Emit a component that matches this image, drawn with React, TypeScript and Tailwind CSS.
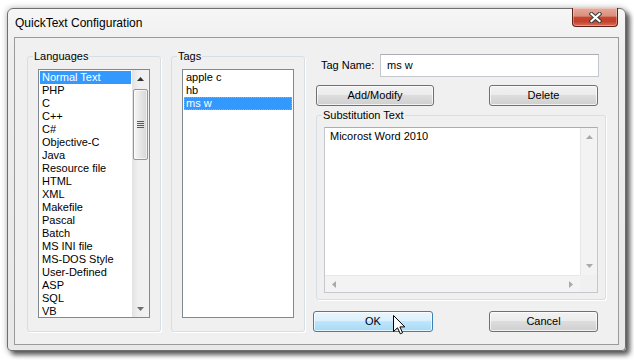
import React from "react";

const languages = [
  "Normal Text", "PHP", "C", "C++", "C#", "Objective-C", "Java", "Resource file", "HTML", "XML",
  "Makefile", "Pascal", "Batch", "MS INI file", "MS-DOS Style", "User-Defined", "ASP", "SQL", "VB",
];
const tags = ["apple c", "hb", "ms w"];

const Tri = ({ dir, color }: { dir: "up" | "down" | "left" | "right"; color: string }) => {
  const d = {
    up: "M0 4 L3.5 0 L7 4 Z",
    down: "M0 0 L7 0 L3.5 4 Z",
    left: "M4 0 L4 7 L0 3.5 Z",
    right: "M0 0 L4 3.5 L0 7 Z",
  }[dir];
  const vertical = dir === "up" || dir === "down";
  return (
    <svg width={vertical ? 7 : 4} height={vertical ? 4 : 7} viewBox={vertical ? "0 0 7 4" : "0 0 4 7"}>
      <path d={d} fill={color} />
    </svg>
  );
};

const GroupBox = ({ label, className, children }: { label: string; className: string; children: React.ReactNode }) => (
  <fieldset className={`border border-[#d5dfe5] rounded-[3px] shadow-[1px_1px_0_#fff] ${className}`}>
    <legend className="ml-[5px] px-[1px] leading-[14px]">{label}</legend>
    {children}
  </fieldset>
);

const Button = ({ label, hot, className }: { label: string; hot?: boolean; className: string }) => (
  <div
    className={`h-[21px] rounded-[3px] border flex items-center justify-center shadow-[inset_0_0_0_1px_rgba(255,255,255,0.7)] ${
      hot
        ? "border-[#3c7fb1] bg-[linear-gradient(to_bottom,#eaf6fd_0%,#d9f0fc_50%,#bee6fd_50%,#a7d9f5_100%)]"
        : "border-[#707070] bg-[linear-gradient(to_bottom,#f2f2f2_0%,#ebebeb_50%,#dddddd_50%,#cfcfcf_100%)]"
    } ${className}`}
  >
    {label}
  </div>
);

export default function App() {
  return (
    <div className="relative w-[634px] h-[360px] overflow-hidden bg-white pt-[8px] pl-[7px] font-['Liberation_Sans',Arial,sans-serif] text-[11px] leading-[13px] text-black">
      {/* window */}
      <div className="w-[619px] h-[343px] flex flex-col border border-[#6e6e6e] rounded-t-[6px] rounded-b-[4px] bg-[linear-gradient(to_bottom,#f6f6f6,#eeeeee_40px,#e8e8e8)] shadow-[0_0_6px_rgba(0,0,0,0.3),4px_4px_5px_rgba(0,0,0,0.6)]">
        {/* title bar */}
        <div className="h-[28px] flex items-start justify-between">
          <div className="pl-[7px] pt-[7px] text-[12px] leading-[15px]">QuickText Configuration</div>
          <div className="mt-[-1px] mr-[7px] w-[46px] h-[19px] rounded-b-[4px] border border-t-0 border-[#5e2219] flex items-center justify-center bg-[linear-gradient(to_bottom,#e8a99b_0%,#d98f7e_45%,#c6462f_52%,#c4412b_75%,#d8705b_100%)] shadow-[inset_0_0_0_1px_rgba(255,255,255,0.3)]">
            <svg width="13" height="11" viewBox="0 0 13 11">
              <path d="M2.5 2 L10.5 9 M10.5 2 L2.5 9" stroke="#3a3a3a" strokeWidth="4.2" strokeLinecap="square" />
              <path d="M2.5 2 L10.5 9 M10.5 2 L2.5 9" stroke="#ffffff" strokeWidth="2.2" strokeLinecap="square" />
            </svg>
          </div>
        </div>

        {/* client area */}
        <div className="mx-[6px] h-[308px] border border-[#9a9a9a] bg-[#f0f0f0] flex items-start pl-[12px] pt-[11px]">
          <GroupBox label="Languages" className="w-[134px] h-[283px]">
            <div className="pl-[10px] pt-[6px]">
              <div className="flex w-[112px] h-[249px] border border-[#828790] bg-white">
                <div className="flex-1 p-[1px] overflow-hidden">
                  {languages.map((l, i) => (
                    <div
                      key={l}
                      className={`h-[13px] pl-[2px] whitespace-nowrap ${i === 0 ? "bg-[#3399ff] text-white" : ""}`}
                    >
                      {l}
                    </div>
                  ))}
                </div>
                <div className="w-[17px] flex flex-col bg-[linear-gradient(to_right,#e2e2e2,#efefef_35%,#f2f2f2)]">
                  <div className="h-[17px] flex items-center justify-center">
                    <Tri dir="up" color="#303030" />
                  </div>
                  <div className="flex-1 pt-[2px]">
                    <div className="mx-[1px] h-[71px] rounded-[2px] border border-[#959595] bg-[linear-gradient(to_right,#f6f6f6,#e6e6e6_50%,#d6d6d6)] flex items-center justify-center shadow-[inset_0_0_0_1px_rgba(255,255,255,0.6)]">
                      <svg width="7" height="7" viewBox="0 0 7 7">
                        <path d="M0 0.5 H7 M0 2.5 H7 M0 4.5 H7 M0 6.5 H7" stroke="#5a5a5a" strokeWidth="1" />
                      </svg>
                    </div>
                  </div>
                  <div className="h-[17px] flex items-center justify-center">
                    <Tri dir="down" color="#6e6e6e" />
                  </div>
                </div>
              </div>
            </div>
          </GroupBox>

          <GroupBox label="Tags" className="ml-[10px] w-[134px] h-[283px]">
            <div className="pl-[10px] pt-[6px]">
              <div className="w-[112px] h-[249px] border border-[#828790] bg-white p-[1px]">
                {tags.map((t, i) => (
                  <div
                    key={t}
                    className={`h-[13px] pl-[2px] whitespace-nowrap ${
                      i === 2 ? "bg-[#3399ff] text-white outline outline-1 outline-dotted outline-[#e59a3c] outline-offset-[-1px]" : ""
                    }`}
                  >
                    {t}
                  </div>
                ))}
              </div>
            </div>
          </GroupBox>

          {/* right column */}
          <div className="ml-[8px] w-[293px] flex flex-col">
            <div className="mt-[5px] flex items-center">
              <div className="w-[67px] pl-[8px]">Tag Name:</div>
              <div className="w-[219px] h-[23px] border border-[#c4c7ce] border-t-[#abadb3] bg-white pl-[6px] flex items-center">
                ms w
              </div>
            </div>
            <div className="mt-[8px] flex justify-between pl-[3px] pr-[8px]">
              <Button label="Add/Modify" className="w-[118px]" />
              <Button label="Delete" className="w-[109px]" />
            </div>
            <GroupBox label="Substitution Text" className="mt-[2px] ml-[3px] w-[290px] h-[192px]">
              <div className="pl-[7px] pt-[5px]">
                <div className="w-[274px] h-[166px] border border-[#c4c7ce] border-t-[#abadb3] bg-white grid grid-cols-[1fr_17px] grid-rows-[1fr_17px]">
                  <div className="pl-[5px] pt-[2px]">Micorost Word 2010</div>
                  <div className="border-l border-[#e6e6e6] bg-[#f3f3f3] flex flex-col items-center justify-between py-[7px]">
                    <Tri dir="up" color="#a9a9a9" />
                    <Tri dir="down" color="#a9a9a9" />
                  </div>
                  <div className="border-t border-[#e6e6e6] bg-[#f3f3f3] flex items-center justify-between px-[7px]">
                    <Tri dir="left" color="#a9a9a9" />
                    <Tri dir="right" color="#a9a9a9" />
                  </div>
                  <div className="bg-[#f0f0f0]" />
                </div>
              </div>
            </GroupBox>
            <div className="mt-[11px] flex justify-between pr-[8px]">
              <Button label="OK" hot className="w-[120px]" />
              <Button label="Cancel" className="w-[109px]" />
            </div>
          </div>
        </div>
      </div>

      {/* mouse pointer */}
      <svg className="absolute left-[393px] top-[315px]" width="13" height="20" viewBox="0 0 13 20">
        <path d="M0.5 0.5 L0.5 16.5 L4.5 12.8 L7.3 18.8 L9.6 17.8 L6.9 11.9 L11.8 11.9 Z" fill="#fff" stroke="#000" strokeWidth="1" strokeLinejoin="miter" />
      </svg>
    </div>
  );
}
